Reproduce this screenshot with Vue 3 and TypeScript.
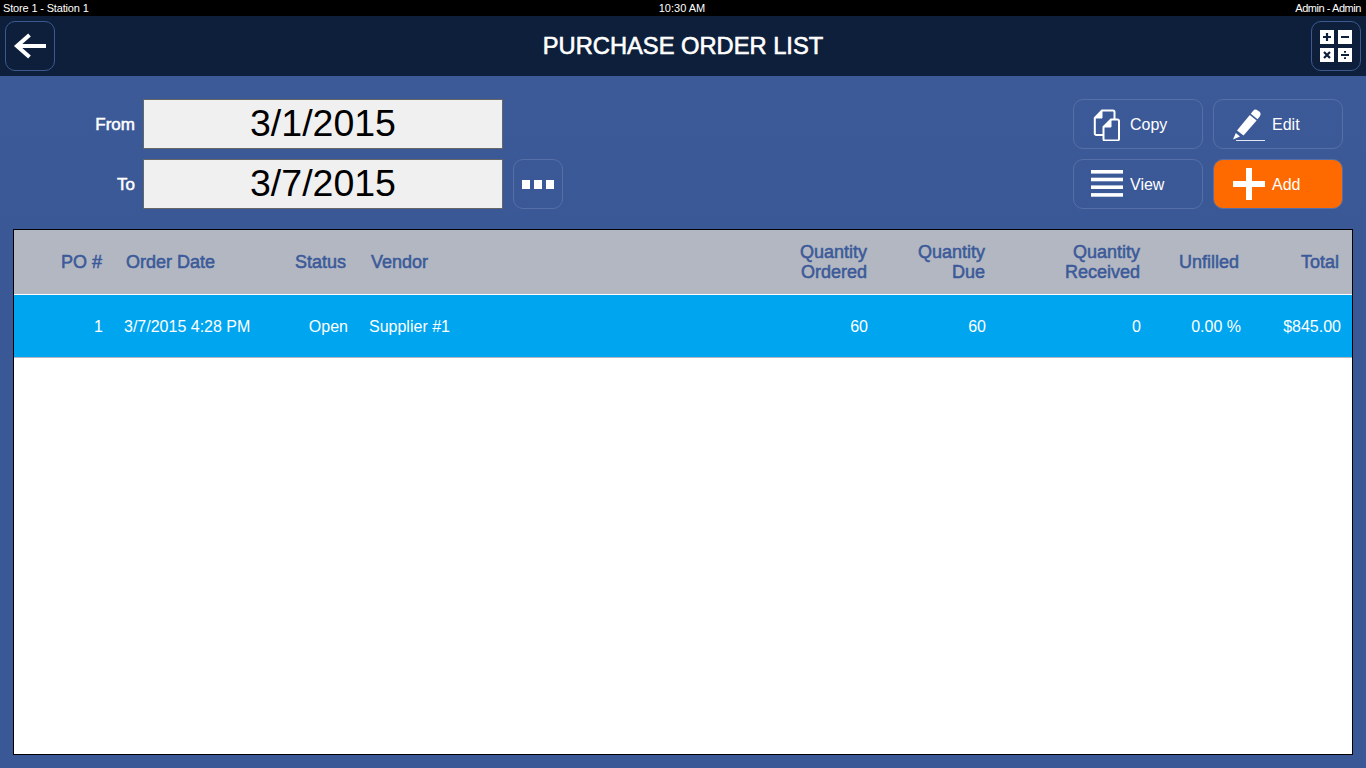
<script setup lang="ts">
interface Column {
  label: string;
  width: number;
  align: "left" | "right";
}

const columns: Column[] = [
  { label: "PO #", width: 100, align: "right" },
  { label: "Order Date", width: 136, align: "left" },
  { label: "Status", width: 109, align: "right" },
  { label: "Vendor", width: 341, align: "left" },
  { label: "Quantity\nOrdered", width: 179, align: "right" },
  { label: "Quantity\nDue", width: 118, align: "right" },
  { label: "Quantity\nReceived", width: 155, align: "right" },
  { label: "Unfilled", width: 100, align: "right" },
  { label: "Total", width: 100, align: "right" },
];

const rows: string[][] = [
  ["1", "3/7/2015 4:28 PM", "Open", "Supplier #1", "60", "60", "0", "0.00 %", "$845.00"],
];

const gridColumns = columns.map((c) => c.width + "px").join(" ");
</script>

<template>
  <div class="screen">
    <div class="status-bar">
      <span class="store">Store 1 - Station 1</span>
      <span class="clock">10:30 AM</span>
      <span class="user">Admin - Admin</span>
    </div>

    <header class="title-bar">
      <button class="btn square">
        <svg width="48" height="48" viewBox="0 0 48 48" fill="none" stroke="#fff" stroke-width="4">
          <path d="M40 24H12" />
          <path d="M23.500 13 11 24l12.500 11" />
        </svg>
      </button>
      <h1>PURCHASE ORDER LIST</h1>
      <button class="btn square">
        <svg width="48" height="48" viewBox="0 0 48 48">
          <rect x="8" y="8" width="14" height="14" fill="#fff" />
          <rect x="26" y="8" width="14" height="14" fill="#fff" />
          <rect x="8" y="26" width="14" height="14" fill="#fff" />
          <rect x="26" y="26" width="14" height="14" fill="#fff" />
          <path d="M11 15h8M15 11v8M29 15h8" stroke="#0d1f3b" stroke-width="2.2" />
          <path d="M12 30l6 6M18 30l-6 6M29 33h8" stroke="#0d1f3b" stroke-width="2.2" />
          <path d="M33 29v1.800M33 35.200V37" stroke="#0d1f3b" stroke-width="2" />
        </svg>
      </button>
    </header>

    <section class="toolbar">
      <div class="dates">
        <label>From</label>
        <div class="date-box">3/1/2015</div>
        <span></span>
        <label>To</label>
        <div class="date-box">3/7/2015</div>
        <button class="btn square dots"><i></i><i></i><i></i></button>
      </div>

      <div class="actions">
        <button class="btn action">
          <svg width="32" height="33" viewBox="0 0 32 33" fill="none" stroke="#fff" stroke-width="2">
            <path d="M23.500 11V4A1.500 1.500 0 0 0 22 2.500H11L3.800 10V25.500A1.500 1.500 0 0 0 5.300 27H12" />
            <path d="M11 2.500V10H3.800z" fill="#fff" stroke-width="1" />
            <path d="M20 11.500H26.500A1.500 1.500 0 0 1 28 13V31A1.500 1.500 0 0 1 26.500 32.500H14A1.500 1.500 0 0 1 12.500 31V19z" />
            <path d="M20 11.500V19H12.500z" fill="#fff" stroke-width="1" />
          </svg>
          <span>Copy</span>
        </button>
        <button class="btn action even">
          <svg width="32" height="33" viewBox="0 0 32 33" fill="#fff">
            <path d="M17.800 5.700 20 3a3.500 3.500 0 0 1 4.700-.6l1.500 1.200a3.500 3.500 0 0 1 .5 4.800L24.500 11.200z" />
            <path d="M16.800 7 23.600 12.500 10.500 27.500 4 22.500z" />
            <path d="M2.800 25 7 28.500 0 31.500z" />
            <rect x="3" y="32" width="29" height="1" opacity=".85" />
          </svg>
          <span>Edit</span>
        </button>
        <button class="btn action">
          <svg width="32" height="28" viewBox="0 0 32 28" fill="#fff">
            <rect y="0" width="32" height="3.600" />
            <rect y="7.700" width="32" height="3.600" />
            <rect y="15.400" width="32" height="3.600" />
            <rect y="23.100" width="32" height="3.600" />
          </svg>
          <span>View</span>
        </button>
        <button class="btn action even add">
          <svg width="32" height="32" viewBox="0 0 32 32" fill="#fff">
            <rect x="13" width="6" height="32" />
            <rect y="13" width="32" height="6" />
          </svg>
          <span>Add</span>
        </button>
      </div>
    </section>

    <section class="table">
      <div class="thead" :style="{ gridTemplateColumns: gridColumns }">
        <div
          v-for="col in columns"
          :key="col.label"
          class="th"
          :class="col.align"
        >{{ col.label }}</div>
      </div>
      <div
        v-for="(row, i) in rows"
        :key="i"
        class="tr"
        :style="{ gridTemplateColumns: gridColumns }"
      >
        <div
          v-for="(value, j) in row"
          :key="j"
          class="td"
          :class="columns[j].align"
        >{{ value }}</div>
      </div>
    </section>
  </div>
</template>

<style scoped>
.screen {
  width: 1366px;
  height: 768px;
  display: flex;
  flex-direction: column;
  overflow: hidden;
  background: linear-gradient(#3d5a99, #3b5896 30%);
  font-family: "Liberation Sans", Arial, sans-serif;
  color: #fff;
}

.status-bar {
  height: 16px;
  flex: none;
  display: grid;
  grid-template-columns: 1fr auto 1fr;
  align-items: center;
  padding: 0 5px 1px 3px;
  box-sizing: border-box;
  background: #000;
  font-size: 11px;
}

.store {
  letter-spacing: -0.16px;
}

.user {
  text-align: right;
  letter-spacing: -0.45px;
}

.title-bar {
  height: 60px;
  flex: none;
  display: flex;
  align-items: center;
  justify-content: space-between;
  padding: 0 5px;
  box-sizing: border-box;
  background: #0d1f3a;
}

.title-bar h1 {
  margin: 0;
  font-size: 23.700px;
  font-weight: 400;
  line-height: 60px;
  -webkit-text-stroke: 0.6px #fff;
}

.btn {
  box-sizing: border-box;
  height: 50px;
  padding: 0;
  display: flex;
  align-items: center;
  border: 1px solid #566fa6;
  border-radius: 10px;
  background: transparent;
  color: #fff;
  font: 16px "Liberation Sans", Arial, sans-serif;
}

.square {
  width: 50px;
  justify-content: center;
}

.title-bar .btn {
  border-color: #3c5a8f;
}

.toolbar {
  height: 153px;
  flex: none;
  display: flex;
  justify-content: space-between;
  padding: 23px 23px 20px 0;
  box-sizing: border-box;
}

.dates {
  display: grid;
  grid-template-columns: 135px 360px 50px;
  grid-auto-rows: 50px;
  column-gap: 8px;
  row-gap: 10px;
}

.dates .dots {
  margin-left: 2px;
  gap: 4px;
}

.dots i {
  width: 8px;
  height: 9px;
  background: #fff;
}

.dates label {
  align-self: center;
  padding-top: 2px;
  text-align: right;
  font-size: 17px;
  -webkit-text-stroke: 0.5px #fff;
}

.date-box {
  box-sizing: border-box;
  height: 50px;
  border: 1px solid #666;
  background: #f0f0f0;
  color: #000;
  font-size: 37.500px;
  line-height: 46px;
  text-align: center;
}

.actions {
  display: grid;
  grid-template-columns: 130px 130px;
  grid-auto-rows: 50px;
  gap: 10px;
}

.action {
  gap: 7px;
  padding-left: 17px;
}

.action.even {
  padding-left: 19px;
}

.action span {
  margin-top: 2px;
}

.add {
  background: #ff6a00;
}

.table {
  flex: none;
  height: 526px;
  margin: 0 13px;
  box-sizing: border-box;
  border: 1px solid #000;
  background: #fff;
}

.thead,
.tr {
  display: grid;
}

.thead {
  height: 65px;
  box-sizing: border-box;
  border-bottom: 1px solid #fff;
  background: #b3b7c2;
}

.tr {
  height: 63px;
  box-sizing: border-box;
  border-bottom: 1px solid #b3b7c2;
  background: #00a5f0;
}

.th,
.td {
  align-self: center;
  white-space: pre-line;
}

.th {
  padding: 0 12px;
  color: #3c5a99;
  font-size: 18px;
  line-height: 20px;
  -webkit-text-stroke: 0.55px #3c5a99;
}

.th:nth-child(3),
.th:nth-child(8),
.th:nth-child(9) {
  padding-right: 13px;
}

.td {
  padding: 2px 11px 0 10px;
  font-size: 16px;
  line-height: 20px;
}

.td:nth-child(2) {
  white-space: nowrap;
}

.left {
  text-align: left;
}

.right {
  text-align: right;
}
</style>
